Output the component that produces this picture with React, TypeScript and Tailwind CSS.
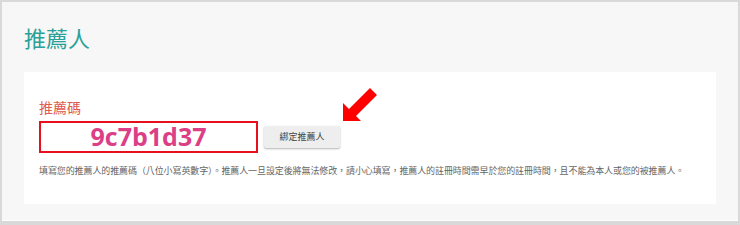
import React from "react";

const cjk = { fontFamily: '"Noto Sans CJK TC", "Noto Sans", sans-serif' };

function RedArrow() {
  return (
    <svg width="38" height="38" viewBox="0 0 38 38" className="absolute left-[317px] top-[14px]">
      <polygon points="2,35 2,17 8,23 29,2 36,9 15,30 20,35" fill="#ff0000" />
    </svg>
  );
}

export default function App() {
  return (
    <div className="w-[740px] h-[225px] bg-[#d9d9d9] p-[2px] pb-[4px]" style={cjk}>
      <div className="h-full bg-[#f7f7f7] px-[22px] border-b border-white">
        <h1 className="pt-[20px] h-[70px] text-[22px] leading-[30px] text-[#2aa198] font-normal">推薦人</h1>
        <div className="relative bg-white h-[132px] pl-[15px] pt-[25px]">
          <div className="text-[14px] leading-[20px] text-[#e05a4e]">推薦碼</div>
          <div className="flex items-center gap-[6px] mt-[4px]">
            <div className="w-[219px] h-[32px] border-2 border-[#e8101c] flex items-center justify-center">
              <span
                className="text-[25px] font-bold text-[#dc3f86] leading-none pb-[2px]"
                style={{ fontFamily: '"Open Sans", sans-serif' }}
              >
                9c7b1d37
              </span>
            </div>
            <button className="w-[76px] h-[22px] bg-[#eeeeee] rounded-[2px] shadow-[0_1px_2px_rgba(0,0,0,0.3)] text-[9px] text-[#444]">
              綁定推薦人
            </button>
          </div>
          <RedArrow />
          <p className="mt-[11px] text-[9px] leading-[14px] text-[#666] tracking-[-0.1px]">
            填寫您的推薦人的推薦碼（八位小寫英數字）。推薦人一旦設定後將無法修改，請小心填寫，推薦人的註冊時間需早於您的註冊時間，且不能為本人或您的被推薦人。
          </p>
        </div>
      </div>
    </div>
  );
}
